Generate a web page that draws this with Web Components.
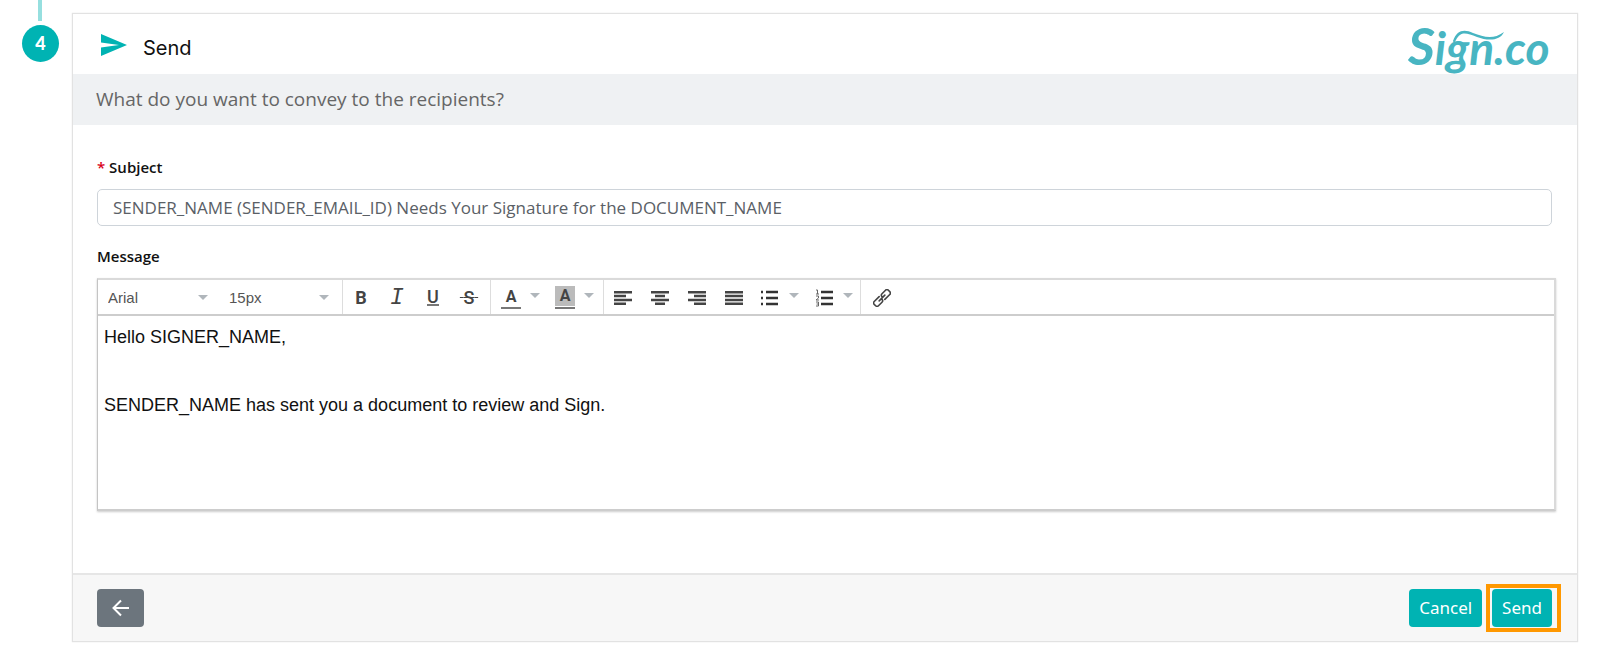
<!DOCTYPE html>
<html lang="en">
<head>
<meta charset="utf-8">
<meta name="viewport" content="width=device-width, initial-scale=1">
<title>Send document</title>
<style>
  body { margin: 0; background: #fff; color: #111; font-family: "Open Sans", "Noto Sans", sans-serif; }
</style>
</head>
<body>
<send-page></send-page>
<script>
const define = (name, html, setup) => customElements.define(name, class extends HTMLElement {
  constructor() {
    super();
    const t = document.createElement('template');
    t.innerHTML = html;
    this.attachShadow({ mode: 'open' }).append(t.content.cloneNode(true));
  }
  connectedCallback() { if (setup) setup(this, this.shadowRoot); }
});

define('step-marker', `
<style>
  :host { display: flex; flex-direction: column; align-items: center; width: 37px; }
  .line { width: 4px; height: 21px; background: #96dfdf; margin-right: 1px; }
  .dot { width: 37px; height: 37px; margin-top: 4px; border-radius: 50%; background: #00b3b3; color: #fff;
    display: flex; align-items: center; justify-content: center; box-sizing: border-box; padding-bottom: 2px;
    font: 900 18px/20px Lato, sans-serif; }
</style>
<div class="line"></div><div class="dot"><slot></slot></div>`);

define('brand-logo', `
<style>
  :host { display: block; width: 146px; height: 60px; }
  svg { display: block; overflow: visible; }
  text { font: italic 700 46px Lato, sans-serif; fill: #48b5c2; }
  .cap { font-size: 52px; }
</style>
<svg width="146" height="60" viewBox="0 0 146 60" role="img" aria-label="Sign.co">
  <text x="1" y="41"><tspan class="cap">S</tspan>ign.co</text>
  <path d="M46 17 C50 6 57 5 66 9 C77 13 86 16 97 8 C93 17 81 17 70 13 C59 9 54 7 49 16 Q47 20 46 17Z" fill="#48b5c2"/>
</svg>`);

define('app-button', `
<style>
  :host { display: block; }
  button { display: flex; align-items: center; justify-content: center; box-sizing: border-box; height: 38px;
    min-width: 47px; padding: 0 10px; border: 0; border-radius: 4px; background: #00b3b3; color: #fff;
    font: 400 17px/24px "Noto Sans", sans-serif; }
  :host([kind=back]) button { background: #6c757d; }
</style>
<button type="button"><slot></slot></button>`, (el, root) => {
  if (el.hasAttribute('label')) root.querySelector('button').setAttribute('aria-label', el.getAttribute('label'));
});

define('tool-button', `
<style>
  :host { display: block; width: 37px; }
  :host([menu]) { width: 54px; display: flex; }
  button { display: flex; align-items: center; justify-content: center; width: 100%; height: 36px; padding: 0;
    border: 0; background: none; color: #444; font: 700 18px/20px Roboto, sans-serif; }
  :host([menu]) button { width: 36px; }
  .arrow { display: none; width: 12px; align-items: center; padding-bottom: 4px; }
  :host([menu]) .arrow { display: flex; }
</style>
<button type="button"><slot></slot></button>
<span class="arrow"><svg width="12" height="6"><path d="M1 0H11L6 5Z" fill="#b0b6bb"/></svg></span>`, (el, root) => {
  root.querySelector('button').setAttribute('aria-label', el.getAttribute('label'));
});

define('tool-select', `
<style>
  :host { display: grid; align-items: center; width: 121px; }
  select, svg { grid-area: 1 / 1; }
  select { appearance: none; border: 0; background: none; height: 36px; width: 100%; padding: 0 24px 0 8px;
    color: #555; font: 15px/20px "Liberation Sans", Arial, sans-serif; }
  svg { justify-self: end; margin-right: 12px; pointer-events: none; }
</style>
<select><option></option></select>
<svg width="12" height="6"><path d="M1 0H11L6 5Z" fill="#b0b6bb"/></svg>`, (el, root) => {
  root.querySelector('option').textContent = el.getAttribute('value');
  root.querySelector('select').setAttribute('aria-label', el.getAttribute('label'));
});

define('message-editor', `
<style>
  :host { display: block; border: 2px solid #dadada; border-left: 1px solid #c4c4c4; border-bottom-color: #cdcdcd; box-shadow: 0 1px 2px #ccc; }
  .bar { display: flex; height: 33px; border-bottom: 2px solid #cdcdcd; align-items: center; overflow: hidden; padding: 1px 0 0 2px; }
  .group { display: flex; align-items: center; height: 36px; border-right: 1px solid #ddd; }
  .pad { padding: 0 2px; }
  .marks tool-button { width: 36px; }
  .marks { padding-right: 3px; }
  .group:last-child { border: 0; }
  .i { font: italic 400 23px/20px "Liberation Mono", monospace; }
  .u { border-bottom: 2px solid #777; line-height: 15px; font-weight: 500; }
  .s { text-decoration: line-through; font-weight: 500; white-space: pre; }
  .s::before, .s::after { content: "\\2009"; }
  .a { display: block; width: 20px; height: 20px; border-bottom: 2px solid #777; font: 700 16px/20px Roboto, sans-serif; text-align: center; }
  .hl { background: #bbb; background-clip: content-box; padding-bottom: 1px; }
  svg { display: block; }
  textarea { display: block; box-sizing: border-box; width: 100%; height: 193px; border: 0; outline: 0; resize: none;
    padding: 4px 6px; background: #fff; color: #111; font: 18px/34px "Liberation Sans", Arial, sans-serif; }
</style>
<div class="bar" role="toolbar" aria-label="Formatting">
  <div class="group"><tool-select value="Arial" label="Font"></tool-select><tool-select value="15px" label="Size"></tool-select></div>
  <div class="group marks">
    <tool-button label="Bold"><span>B</span></tool-button>
    <tool-button label="Italic"><span class="i">I</span></tool-button>
    <tool-button label="Underline"><span class="u">U</span></tool-button>
    <tool-button label="Strikethrough"><span class="s">S</span></tool-button>
  </div>
  <div class="group pad">
    <tool-button menu label="Text colour"><span class="a">A</span></tool-button>
    <tool-button menu label="Highlight colour"><span class="a hl">A</span></tool-button>
  </div>
  <div class="group">
    <tool-button label="Align left"><svg width="18" height="14" stroke="#444" stroke-width="2.500"><path d="M0 1.200H18M0 5H12M0 9H18M0 12.800H12"/></svg></tool-button>
    <tool-button label="Align centre"><svg width="18" height="14" stroke="#444" stroke-width="2.500"><path d="M0 1.200H18M4 5H14M0 9H18M4 12.800H14"/></svg></tool-button>
    <tool-button label="Align right"><svg width="18" height="14" stroke="#444" stroke-width="2.500"><path d="M0 1.200H18M6 5H18M0 9H18M6 12.800H18"/></svg></tool-button>
    <tool-button label="Justify"><svg width="18" height="14" stroke="#444" stroke-width="2.500"><path d="M0 1.200H18M0 5H18M0 9H18M0 12.800H18"/></svg></tool-button>
    <tool-button menu label="Bulleted list"><svg width="18" height="16" stroke="#333" stroke-width="2.300"><path d="M5 2H17M5 8H17M5 14H17M0 2H2M0 8H2M0 14H2"/></svg></tool-button>
    <tool-button menu label="Numbered list"><svg width="18" height="18" fill="none" stroke="#333" stroke-width="2.300"><path d="M6 3H18M6 9H18M6 15H18"/><path d="M1 1H2.500V5M1 5H4M1 7H3.500V9L1 11H4M1 13H3.500V17H1M1.500 15H3.500" stroke-width="1" stroke="#666"/></svg></tool-button>
  </div>
  <div class="group pad">
    <tool-button label="Insert link"><svg width="18" height="18" viewBox="0 0 18 18" fill="none" stroke="#444" stroke-width="1.600" stroke-linecap="round"><g transform="rotate(-45 9 9)"><path d="M8 6H1Q-1 6 -1 8V10Q-1 12 1 12H6Q8 12 8 10M10 12H17Q19 12 19 10V8Q19 6 17 6H12Q10 6 10 8M5 9H13"/></g></svg></tool-button>
  </div>
</div>
<textarea aria-label="Message" spellcheck="false">Hello SIGNER_NAME,

SENDER_NAME has sent you a document to review and Sign.</textarea>`);

define('send-card', `
<style>
  :host { display: block; border: 1px solid #e2e2e2; box-shadow: 0 0 1px #ddd; background: #fff; }
  header { display: flex; align-items: center; justify-content: space-between; height: 60px; padding: 0 24px 0 27px; }
  .title { display: flex; align-items: center; gap: 16px; padding-top: 2px; }
  h1 { margin: 0; padding-top: 5px; font: 400 20px/28px Inter, sans-serif; color: #111; }
  brand-logo { align-self: start; margin-top: 10px; }
  .sub { margin: 0; background: #eff1f3; color: #666; padding: 10px 23px; font: 400 19px/31px "Open Sans", sans-serif; }
  .body { padding: 30px 21px 62px 24px; }
  label, .label { display: block; font: 600 15px/24px "Open Sans", sans-serif; color: #111; }
  .req { color: #d9001b; }
  input { display: block; box-sizing: border-box; width: calc(100% - 4px); height: 37px; margin: 10px 0 18px; padding: 0 15px;
    border: 1px solid #ced4da; border-radius: 5px; background: #fff; color: #5a6066; font: 400 17px/24px "Open Sans", sans-serif; }
  message-editor { margin-top: 10px; }
  footer { display: flex; align-items: center; justify-content: space-between; height: 68px; box-sizing: border-box;
    padding: 0 16px 0 24px; background: #f7f7f7; border-top: 2px solid #e6e6e6; }
  .actions { display: flex; align-items: center; gap: 4px; }
  .focus { border: 4px solid #ff9800; padding: 1px 5px 1px 2px; }
</style>
<header>
  <div class="title">
    <svg width="27" height="24" viewBox="0 0 27 24"><path d="M1 1L27 12L1 23V14.500L19 12L1 9.500Z" fill="#00b3b3"/></svg>
    <h1>Send</h1>
  </div>
  <brand-logo></brand-logo>
</header>
<p class="sub">What do you want to convey to the recipients?</p>
<div class="body">
  <label for="subject"><span class="req">*</span> Subject</label>
  <input id="subject" type="text" required value="SENDER_NAME (SENDER_EMAIL_ID) Needs Your Signature for the DOCUMENT_NAME">
  <div class="label">Message</div>
  <message-editor></message-editor>
</div>
<footer>
  <app-button kind="back" label="Back"><svg width="18" height="18" viewBox="0 0 18 18" fill="none" stroke="#fff" stroke-width="2"><path d="M17 9H2M9 1.500L1.500 9L9 16.500"/></svg></app-button>
  <div class="actions">
    <app-button>Cancel</app-button>
    <div class="focus"><app-button>Send</app-button></div>
  </div>
</footer>`);

define('send-page', `
<style>
  :host { display: grid; grid-template-columns: 37px 1fr; column-gap: 13px; padding: 0 22px 16px 22px; }
  send-card { margin-top: 13px; }
</style>
<step-marker>4</step-marker>
<send-card></send-card>`);
</script>
</body>
</html>
